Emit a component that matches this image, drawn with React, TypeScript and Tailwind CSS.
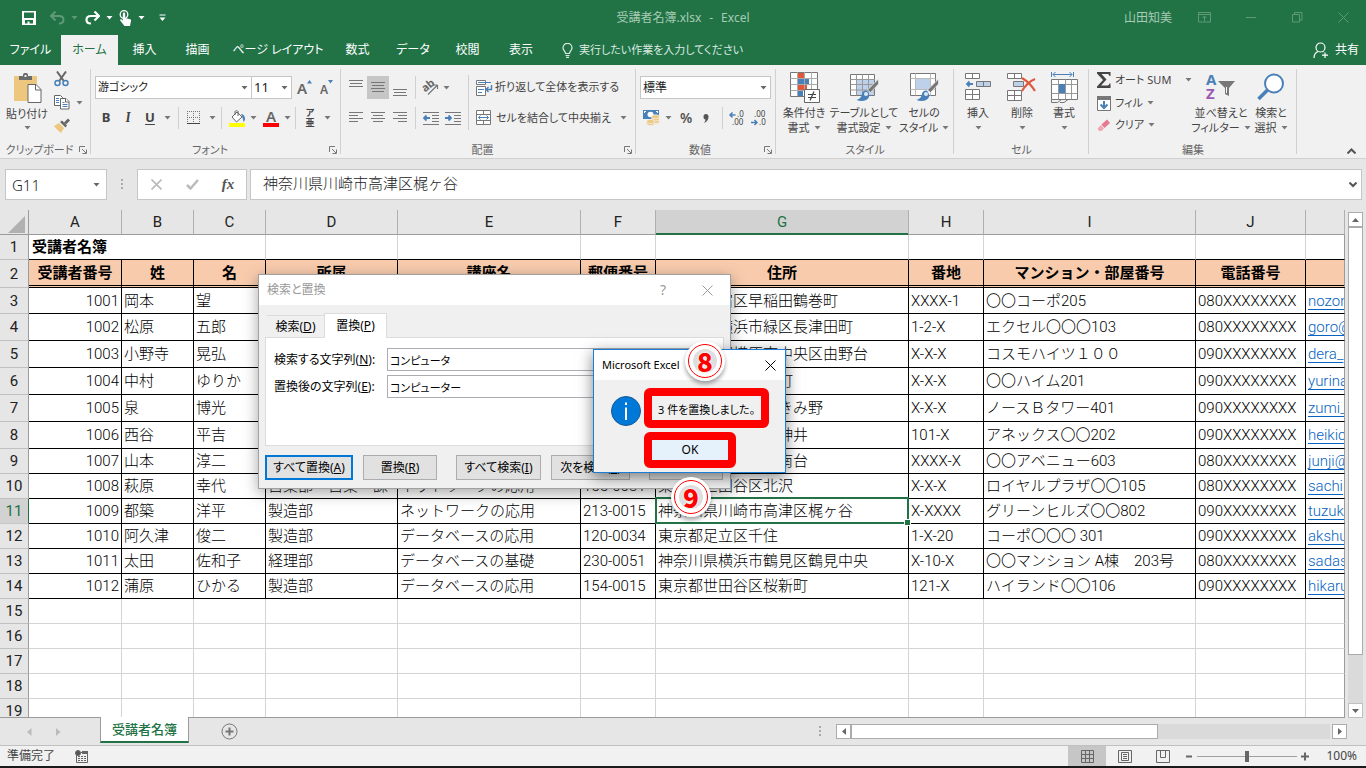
import { useState, type ReactNode } from 'react'

type Row = {
  id: string
  last: string
  first: string
  dept: string
  course: string
  zip: string
  address: string
  block: string
  building: string
  phone: string
  mail: string
}

const rows: Row[] = [
  { id: '1001', last: '岡本', first: '望', dept: '', course: '', zip: '', address: '東京都新宿区早稲田鶴巻町', block: 'XXXX-1', building: '〇〇コーポ205', phone: '080XXXXXXXX', mail: 'nozomi@' },
  { id: '1002', last: '松原', first: '五郎', dept: '', course: '', zip: '', address: '神奈川県横浜市緑区長津田町', block: '1-2-X', building: 'エクセル〇〇〇103', phone: '080XXXXXXXX', mail: 'goro@' },
  { id: '1003', last: '小野寺', first: '晃弘', dept: '', course: '', zip: '', address: '神奈川県相模原市中央区由野台', block: 'X-X-X', building: 'コスモハイツ１００', phone: '090XXXXXXXX', mail: 'dera_' },
  { id: '1004', last: '中村', first: 'ゆりか', dept: '', course: '', zip: '', address: '東京都中央区日本町', block: 'X-X-X', building: '〇〇ハイム201', phone: '090XXXXXXXX', mail: 'yurina' },
  { id: '1005', last: '泉', first: '博光', dept: '', course: '', zip: '', address: '神奈川県大和市つきみ野', block: 'X-X-X', building: 'ノースＢタワー401', phone: '090XXXXXXXX', mail: 'zumi_' },
  { id: '1006', last: '西谷', first: '平吉', dept: '', course: '', zip: '', address: '東京都練馬区上石神井', block: '101-X', building: 'アネックス〇〇202', phone: '090XXXXXXXX', mail: 'heikic' },
  { id: '1007', last: '山本', first: '淳二', dept: '', course: '', zip: '', address: '神奈川県藤沢市湘南台', block: 'XXXX-X', building: '〇〇アベニュー603', phone: '080XXXXXXXX', mail: 'junji@' },
  { id: '1008', last: '萩原', first: '幸代', dept: '営業部　営業一課', course: 'ネットワークの応用', zip: '155-0031', address: '東京都世田谷区北沢', block: 'X-X-X', building: 'ロイヤルプラザ〇〇105', phone: '080XXXXXXXX', mail: 'sachi' },
  { id: '1009', last: '都築', first: '洋平', dept: '製造部', course: 'ネットワークの応用', zip: '213-0015', address: '神奈川県川崎市高津区梶ヶ谷', block: 'X-XXXX', building: 'グリーンヒルズ〇〇802', phone: '090XXXXXXXX', mail: 'tuzuki' },
  { id: '1010', last: '阿久津', first: '俊二', dept: '製造部', course: 'データベースの応用', zip: '120-0034', address: '東京都足立区千住', block: '1-X-20', building: 'コーポ〇〇〇 301', phone: '090XXXXXXXX', mail: 'akshun' },
  { id: '1011', last: '太田', first: '佐和子', dept: '経理部', course: 'データベースの基礎', zip: '230-0051', address: '神奈川県横浜市鶴見区鶴見中央', block: 'X-10-X', building: '〇〇マンション A棟　203号', phone: '080XXXXXXXX', mail: 'sadas' },
  { id: '1012', last: '蒲原', first: 'ひかる', dept: '製造部', course: 'データベースの応用', zip: '154-0015', address: '東京都世田谷区桜新町', block: '121-X', building: 'ハイランド〇〇106', phone: '090XXXXXXXX', mail: 'hikaru' },
]

const rowHeights = [
  'h-[26px]', 'h-[27px]', 'h-[27px]', 'h-[27px]', 'h-[27px]', 'h-[27px]',
  'h-[25px]', 'h-[25px]', 'h-[25px]', 'h-[25px]', 'h-[25px]', 'h-[25px]',
]

const columns = [
  { letter: 'A', width: 'w-[93px]', title: '受講者番号' },
  { letter: 'B', width: 'w-[72px]', title: '姓' },
  { letter: 'C', width: 'w-[72px]', title: '名' },
  { letter: 'D', width: 'w-[132px]', title: '所属' },
  { letter: 'E', width: 'w-[183px]', title: '講座名' },
  { letter: 'F', width: 'w-[75px]', title: '郵便番号' },
  { letter: 'G', width: 'w-[253px]', title: '住所' },
  { letter: 'H', width: 'w-[75px]', title: '番地' },
  { letter: 'I', width: 'w-[212px]', title: 'マンション・部屋番号' },
  { letter: 'J', width: 'w-[110px]', title: '電話番号' },
  { letter: '', width: '', title: '' },
]

const menuTabs = [
  { label: 'ファイル', width: 'w-[61px]' },
  { label: 'ホーム', width: 'w-[57px]' },
  { label: '挿入', width: 'w-[53px]' },
  { label: '描画', width: 'w-[53px]' },
  { label: 'ページ レイアウト', width: 'w-[108px]' },
  { label: '数式', width: 'w-[51px]' },
  { label: 'データ', width: 'w-[60px]' },
  { label: '校閲', width: 'w-[49px]' },
  { label: '表示', width: 'w-[58px]' },
]

function Caret({ className = 'text-[#777]' }: { className?: string }) {
  return (
    <svg className={`shrink-0 ${className}`} width="7" height="4" viewBox="0 0 7 4" fill="currentColor">
      <path d="M0.5 0h6L3.5 3.5z" />
    </svg>
  )
}

function CaretButton({ label, width = 'w-[12px]' }: { label: string; width?: string }) {
  return (
    <button aria-label={label} className={`${width} h-full shrink-0 flex items-center justify-center`}>
      <Caret />
    </button>
  )
}

function Divider() {
  return <div className="w-px h-full bg-[#d0d0d0] shrink-0" />
}

function Group({ title, width, launcher, children }: { title: string; width: string; launcher?: boolean; children: ReactNode }) {
  return (
    <section className={`${width} shrink-0 relative flex flex-col`}>
      <div className="h-[74px] flex">{children}</div>
      <div className="h-[19px] pt-0.5 flex items-center">
        <span className="flex-1 text-center text-[#666] leading-4 whitespace-nowrap">{title}</span>
        {launcher && (
          <button aria-label={`${title}の設定`} className="mr-1">
            <svg width="8" height="8" viewBox="0 0 8 8" fill="none" stroke="#777">
              <path d="M0.5 6V0.5H6M3 3l4 4M7.5 3.5v4h-4" />
            </svg>
          </button>
        )}
      </div>
      <div className="absolute right-0 top-1 h-[85px] w-px bg-[#d0d0d0]" />
    </section>
  )
}

function BigButton({ icon, lines, width }: { icon: ReactNode; lines: string[]; width: string }) {
  return (
    <button className={`${width} shrink-0 flex flex-col items-center pt-1.5 text-[#444]`}>
      <span className="h-8 flex items-center justify-center">{icon}</span>
      <span className="h-4 mt-0.5 leading-4 whitespace-nowrap">{lines[0]}</span>
      <span className="h-3.5 leading-[14px] whitespace-nowrap flex items-center gap-1">
        {lines[1]}
        <Caret />
      </span>
    </button>
  )
}

function Lines({ rows: ws, align, valign = 'mid' }: { rows: number[]; align: 'l' | 'c' | 'r'; valign?: 'top' | 'mid' | 'bot' }) {
  const top = valign === 'top' ? 2 : valign === 'bot' ? 11 : 4
  return (
    <svg width="14" height="20" viewBox="0 0 14 20" fill="#777" shapeRendering="crispEdges">
      {ws.map((w, i) => (
        <rect key={i} x={align === 'l' ? 0 : align === 'r' ? 14 - w : (14 - w) / 2} y={top + i * 3} width={w} height="1" />
      ))}
    </svg>
  )
}

const PasteIcon = () => (
  <svg width="29" height="31" viewBox="0 0 29 31">
    <path d="M1 3h23v25H1z" fill="#edc77d" />
    <path d="M6 7V3h4V1.500C10 0.700 11 0 12.500 0S15 0.700 15 1.500V3h4v4z" fill="#6b6b6b" />
    <rect x="11.500" y="2" width="2" height="2" fill="#f1f1f1" />
    <path d="M15 11.500h8l5 5V29.500H15z" fill="#fff" stroke="#666" />
    <path d="M22.500 11.500V17H28" fill="none" stroke="#666" />
  </svg>
)

const CutIcon = () => (
  <svg width="15" height="16" viewBox="0 0 15 16" fill="none">
    <path d="M3 0.500L9.800 10M12 0.500L5.200 10" stroke="#666" strokeWidth="2" />
    <circle cx="3.500" cy="12" r="2.500" stroke="#4a80b8" strokeWidth="1.500" />
    <circle cx="11.500" cy="12" r="2.500" stroke="#4a80b8" strokeWidth="1.500" />
  </svg>
)

const CopyIcon = () => (
  <svg width="16" height="15" viewBox="0 0 16 15" fill="#fff" stroke="#666">
    <path d="M0.500 0.500h6l2 2v8h-8z" />
    <path d="M2 3.500h3M2 5.500h3M2 7.500h3" stroke="#4a80b8" />
    <path d="M6.500 3.500h5.500l3 3v7.500H6.500z" />
    <path d="M11.500 3.500V7H15" />
    <path d="M8.500 7.500h2M8.500 9.500h5M8.500 11.500h5" stroke="#4a80b8" />
  </svg>
)

const BrushIcon = () => (
  <svg width="16" height="15" viewBox="0 0 16 15">
    <path d="M0 8l5-3 5 5-3 5C5 13 2 11 0 8z" fill="#edc77d" />
    <path d="M6 4l2-1.500 5 5L11.500 9.500z" fill="#666" />
    <path d="M10 4.500L14 0.500l2 2-4 4z" fill="#666" />
  </svg>
)

const BorderIcon = () => (
  <svg width="14" height="14" viewBox="0 0 14 14" fill="none" stroke="#777" shapeRendering="crispEdges">
    <path d="M0 0.500h13M0 6.500h13M0.500 0v13M6.500 0v13M12.500 0v13" strokeDasharray="1 1" />
    <path d="M0 12.500h13" stroke="#444" />
  </svg>
)

const FillIcon = () => (
  <svg width="17" height="17" viewBox="0 0 17 17">
    <path d="M3 7l5-5 5 5-5.500 5z" fill="#fff" stroke="#666" />
    <path d="M6 5V1.500C6 0.500 9 0.500 9 1.500V6" fill="none" stroke="#666" />
    <path d="M12 4c2 0 4 2 4 4.500 0 1.500-.5 2.500-1.500 3.500C14 9 13.500 7 12 4z" fill="#4a80b8" />
    <rect x="0" y="13" width="16" height="4" fill="#ff0" />
  </svg>
)

const OrientIcon = () => (
  <svg className="overflow-visible" width="17" height="17" viewBox="0 0 17 17">
    <text x="0" y="10" fontSize="11" fontWeight="700" fill="#666" fontFamily="Noto Sans" transform="rotate(-38 6 9)">ab</text>
    <path d="M5 15.500L14.500 6M14.500 6h-4M14.500 6v4" stroke="#777" fill="none" strokeWidth="1.200" />
  </svg>
)

const IndentIcon = ({ right }: { right?: boolean }) => (
  <svg width="17" height="14" viewBox="0 0 17 14" fill="none" stroke="#777">
    <path d="M0 1.500h16M9 4.500h7M9 7.500h7M9 10.500h7M0 13.500h16" shapeRendering="crispEdges" />
    <path d={right ? 'M0 7h6M3.500 4.500L6 7l-2.500 2.500' : 'M7 7H1M3.500 4.500L1 7l2.500 2.500'} stroke="#4a80b8" strokeWidth="1.800" />
  </svg>
)

const WrapIcon = () => (
  <svg width="17" height="16" viewBox="0 0 17 16" fill="none">
    <path d="M0.500 0.500h9v4h-9z" fill="#fff" stroke="#777" />
    <path d="M2 2.500h13" stroke="#4a80b8" />
    <path d="M0.500 6.500h9v9h-9z" fill="#fff" stroke="#777" />
    <path d="M2 9.500h6M2 12.500h4" stroke="#4a80b8" />
    <path d="M15.500 5v4.500H10M12.500 7L10 9.500l2.500 2.500" stroke="#4a80b8" strokeWidth="1.400" />
  </svg>
)

const MergeIcon = () => (
  <svg width="16" height="16" viewBox="0 0 16 16" fill="#fff" stroke="#777">
    <path d="M0.500 0.500h14v14H0.500zM0.500 4.500h14M0.500 10.500h14M7.500 0.500v4M7.500 10.500v4" />
    <path d="M2.500 7.500h10M4.500 5.500l-2 2 2 2M10.500 5.500l2 2-2 2" fill="none" stroke="#4a80b8" />
  </svg>
)

const MoneyIcon = () => (
  <svg width="17" height="16" viewBox="0 0 17 16">
    <rect x="0" y="0" width="16" height="9" fill="#4a80b8" />
    <ellipse cx="7.500" cy="4.500" rx="3" ry="2.700" fill="#fff" />
    <path d="M1 1h2v1H2v1H1zM13 1h2v2h-1V2h-1z" fill="#fff" />
    <g fill="#edc77d" stroke="#f1f1f1" strokeWidth="0.800">
      <ellipse cx="12.500" cy="11.500" rx="4" ry="2" />
      <ellipse cx="12.500" cy="9" rx="4" ry="2" />
      <ellipse cx="12.500" cy="6.800" rx="4" ry="2" />
      <ellipse cx="7.500" cy="13.500" rx="4" ry="2" />
      <ellipse cx="7.500" cy="11.500" rx="4" ry="2" />
    </g>
  </svg>
)

const DecimalIcon = ({ more }: { more?: boolean }) => (
  <svg className="overflow-visible" width="16" height="15" viewBox="0 0 16 15" fill="#444" fontSize="8" fontFamily="Noto Sans">
    <text x={more ? 8 : 3} y="6">{more ? '.0' : '.00'}</text>
    <text x={more ? 3 : 8} y="14">{more ? '.00' : '.0'}</text>
    {more ? (
      <path d="M6.500 4H1M3.500 1.500L1 4l2.500 2.500" stroke="#4a80b8" strokeWidth="1.500" fill="none" />
    ) : (
      <path d="M0 11.500h6M3.500 9L6 11.500 3.500 14" stroke="#4a80b8" strokeWidth="1.500" fill="none" />
    )}
  </svg>
)

const CondIcon = () => (
  <svg width="31" height="31" viewBox="0 0 31 31">
    <path d="M1.500 0.500h27v24h-27z" fill="#fff" stroke="#777" />
    <path d="M9 1h6v5H9zM9 13h9v5H9z" fill="#e0583c" />
    <path d="M9 7h11v5H9zM9 19h5v5H9z" fill="#4a80b8" />
    <path d="M8.500 0v24M15.500 0v24M22.500 0v24M1.500 6.500h27M1.500 12.500h27M1.500 18.500h27" stroke="#aaa" />
    <path d="M15.500 17.500h15v13h-15z" fill="#fff" stroke="#666" />
    <path d="M19 22.500h8M19 25.500h8M25 19.500l-4 9" stroke="#444" strokeWidth="1.200" />
  </svg>
)

const StyleBrush = () => (
  <>
    <path d="M28.500 6v5L20.500 19.500l-3-2.500z" fill="#777" stroke="#f1f1f1" strokeWidth="0.700" />
    <path d="M17 17.500c-3-.5-4.500 1-5 3.500-.5 3-2 5-5.500 6 5 2.200 11 1 12.500-3 .7-2-.2-4-2-6.500z" fill="#4a80b8" />
    <circle cx="16" cy="21" r="2" fill="#dce9f6" />
  </>
)

const TableStyleIcon = () => (
  <svg width="29" height="29" viewBox="0 0 29 29">
    <path d="M0.500 1.500h24v21h-24z" fill="#fff" stroke="#777" />
    <path d="M7 7h17v15H7z" fill="#bdd1ea" />
    <path d="M6.500 1.500v21M12.500 1.500v21M18.500 1.500v21M0.500 6.500h24M0.500 11.500h24M0.500 17h24" stroke="#999" />
    <StyleBrush />
  </svg>
)

const CellStyleIcon = () => (
  <svg width="29" height="29" viewBox="0 0 29 29">
    <path d="M0.500 0.500h25v22h-25z" fill="#fff" stroke="#777" />
    <path d="M5.500 0.500v22M20.500 0.500v22M0.500 5.500h25M0.500 16.500h25" stroke="#bbb" />
    <path d="M6 6h14v10H6z" fill="#bdd1ea" />
    <StyleBrush />
  </svg>
)

const InsertIcon = () => (
  <svg width="27" height="28" viewBox="0 0 27 28" fill="#fff" stroke="#777">
    <path d="M0.500 0.500h14v5h-14zM7.500 0.500v5M0.500 16.500h14v10h-14zM7.500 16.500v10M0.500 21.500h14" />
    <path d="M11.500 8.500h14v5h-14zM18.500 8.500v5" fill="#bdd1ea" />
    <path d="M8 11H2M4.500 8.500L2 11l2.500 2.500" fill="none" stroke="#4a80b8" strokeWidth="1.800" />
  </svg>
)

const DeleteIcon = () => (
  <svg width="30" height="28" viewBox="0 0 30 28" fill="#fff" stroke="#777">
    <path d="M0.500 0.500h14v5h-14zM7.500 0.500v5M0.500 17.500h14v10h-14zM7.500 17.500v10M0.500 22.500h14" />
    <path d="M6.500 8.500h10v5h-10z" fill="#bdd1ea" />
    <path d="M15 5c5 3 10 8 13 13M28 6c-5 2-10 7-13 12" fill="none" stroke="#e0583c" strokeWidth="2.200" />
  </svg>
)

const FormatIcon = () => (
  <svg width="29" height="31" viewBox="0 0 29 31" fill="#fff" stroke="#777">
    <path d="M1.500 0v5M23.500 0v5M3 2.500h19M5.500 0L3 2.500 5.500 5M19.500 0L22 2.500 19.500 5" fill="none" stroke="#4a80b8" />
    <path d="M1.500 7.500h26v20h-26z" />
    <path d="M8.500 7.500v20M15.500 7.500v20M21.500 7.500v20M1.500 12.500h26M1.500 21.500h26" stroke="#999" />
    <path d="M9 12h6v9H9z" fill="#4a80b8" stroke="none" />
    <path d="M1.500 27.500v3h6l4-3M10 30.500h4l4-3" fill="none" />
  </svg>
)

const SortIcon = () => (
  <svg className="overflow-visible" width="30" height="28" viewBox="0 0 30 28" fontFamily="Noto Sans" fontWeight="700" fontSize="15">
    <text x="0" y="12" fill="#4a80b8">A</text>
    <text x="0" y="26" fill="#9b59b6">Z</text>
    <path d="M12 8h17l-6 7v8l-4-2v-6z" fill="#777" />
    <path d="M20.500 14v6" stroke="#fff" />
  </svg>
)

const SearchIcon = () => (
  <svg width="28" height="28" viewBox="0 0 28 28" fill="none">
    <path d="M1.500 26L10.500 17" stroke="#4a80b8" strokeWidth="3.500" />
    <circle cx="17" cy="10.500" r="9" fill="#fff" stroke="#4a80b8" strokeWidth="2" />
  </svg>
)

function TitleBar() {
  return (
    <header className="h-[35px] shrink-0 relative flex items-center text-white">
      <button aria-label="上書き保存" className="ml-[22px] w-[14px]">
        <svg width="14" height="14" viewBox="0 0 14 14">
          <path fillRule="evenodd" d="M0 0h14v14H0zM2 1.500V7h10V1.500zM3 9v3.500h2.500v-2h2v2H11V9z" fill="#fff" />
        </svg>
      </button>
      <button aria-label="元に戻す" className="ml-3.5 flex items-center gap-[6px] text-[#5e9a78]">
        <svg width="15" height="14" viewBox="0 0 15 14" fill="none" stroke="currentColor" strokeWidth="2">
          <path d="M5.500 0.500L1 5l4.500 4.500M1 5h8c3 0 4.500 1.500 4.500 3.700S12 12.500 9 12.500" />
        </svg>
        <Caret className="text-[#5e9a78]" />
      </button>
      <button aria-label="やり直し" className="ml-[7px] flex items-center gap-[6px]">
        <svg width="15" height="14" viewBox="0 0 15 14" fill="none" stroke="currentColor" strokeWidth="2.200">
          <path d="M9.500 0.500L14 5 9.500 9.500M14 5H6C3 5 1.500 6.500 1.500 8.700S3 12.500 6 12.500" />
        </svg>
        <Caret className="text-white" />
      </button>
      <button aria-label="タッチ/マウス モードの切り替え" className="ml-[6px] flex items-center gap-[6px]">
        <svg width="13" height="16" viewBox="0 0 13 16">
          <circle cx="5" cy="4.500" r="3.800" fill="none" stroke="#fff" strokeWidth="1.300" />
          <path d="M3.800 3.500c0-1.500 2.400-1.500 2.400 0V8l5 1.200c.8.300 1 .8.800 1.600L11 16H5.500L1.200 10.500c-.3-1 .8-1.500 1.600-.8l1 1z" fill="#fff" />
        </svg>
        <Caret className="text-white" />
      </button>
      <button aria-label="クイック アクセス ツール バーのカスタマイズ" className="ml-3.5">
        <svg width="7" height="8" viewBox="0 0 7 8" fill="#fff">
          <path d="M0.500 0.500h6v1h-6zM0.500 3.500h6l-3 3.500z" />
        </svg>
      </button>
      <h1 className="absolute left-1/2 -translate-x-1/2 w-[140px] flex justify-center gap-2 text-[#a7cbb5] whitespace-nowrap">
        <span>受講者名簿.xlsx</span>
        <span>-</span>
        <span>Excel</span>
      </h1>
      <div className="ml-auto flex items-center text-[#5e9a78]">
        <span className="w-[49px] text-[#a7cbb5] whitespace-nowrap">山田知美</span>
        <button aria-label="リボンの表示オプション" className="ml-[25px]">
          <svg width="13" height="11" viewBox="0 0 13 11" fill="none" stroke="currentColor">
            <path d="M0.500 0.500h12v9.500h-12zM0.500 2.500h12M6.500 9V4.500M4.500 6l2-2 2 2" />
          </svg>
        </button>
        <button aria-label="最小化" className="ml-[35px]">
          <svg width="11" height="11" viewBox="0 0 11 11" stroke="currentColor"><path d="M0 5.500h10" /></svg>
        </button>
        <button aria-label="元に戻す (縮小)" className="ml-[35px]">
          <svg width="11" height="11" viewBox="0 0 11 11" fill="none" stroke="currentColor">
            <path d="M0.500 2.500h7v7.500h-7zM2.500 2.500v-2h7.500v7.500H8" />
          </svg>
        </button>
        <button aria-label="閉じる" className="ml-[35px] mr-[17px]">
          <svg width="11" height="11" viewBox="0 0 11 11" stroke="currentColor"><path d="M0.500 0.500l10 10M10.500 0.500l-10 10" /></svg>
        </button>
      </div>
    </header>
  )
}

function MenuBar() {
  const [active, setActive] = useState('ホーム')
  return (
    <nav className="h-[30px] shrink-0 flex items-stretch text-white">
      {menuTabs.map((t) => (
        <button
          key={t.label}
          onClick={() => setActive(t.label)}
          className={`${t.width} shrink-0 whitespace-nowrap ${t.label === active ? 'bg-[#f1f1f1] text-[#217346]' : ''}`}
        >
          {t.label}
        </button>
      ))}
      <button className="ml-3 flex items-center gap-1.5 text-[11px] text-[#dbeae1] whitespace-nowrap">
        <svg width="11" height="15" viewBox="0 0 11 15" fill="none" stroke="currentColor" strokeWidth="1.200">
          <path d="M3.500 10.500C3.500 8 1 7.500 1 4.800a4.500 4.500 0 0 1 9 0c0 2.700-2.500 3.200-2.500 5.700zM3.500 12.500h4M4 14.300h3" />
        </svg>
        実行したい作業を入力してください
      </button>
      <button className="ml-auto mr-[7px] flex items-center gap-1.5">
        <svg width="16" height="17" viewBox="0 0 16 17" fill="none" stroke="currentColor" strokeWidth="1.200">
          <circle cx="7.500" cy="5.500" r="4.500" />
          <path d="M1 16c0-3.500 1.500-5.500 4-6.500M9.500 9.500l1 .5M12 10.500v5.500M9 13.200h6" />
        </svg>
        共有
      </button>
    </nav>
  )
}

function Ribbon() {
  return (
    <div className="h-[94px] shrink-0 flex bg-[#f1f1f1] border-b border-[#d0d0d0] text-[11px] text-[#444] overflow-hidden">
      <Group title="クリップボード" width="w-[91px]" launcher>
        <button className="w-[50px] ml-0.5 flex flex-col items-center pt-2">
          <PasteIcon />
          <span className="mt-0.5 leading-4 whitespace-nowrap">貼り付け</span>
          <span className="h-3 flex items-center"><Caret /></span>
        </button>
        <div className="flex flex-col pt-1.5 pl-0.5 gap-2">
          <button aria-label="切り取り"><CutIcon /></button>
          <button aria-label="コピー" className="flex items-center gap-1.5"><CopyIcon /><Caret /></button>
          <button aria-label="書式のコピー/貼り付け"><BrushIcon /></button>
        </div>
      </Group>

      <Group title="フォント" width="w-[250px]" launcher>
        <div className="flex flex-col pt-[11px] pl-1 gap-2">
          <div className="h-[23px] flex">
            <div className="relative w-[157px]">
              <select aria-label="フォント" className="appearance-none w-full h-full bg-white border border-[#c6c6c6] px-0.5 text-[#222]">
                <option>游ゴシック</option>
              </select>
              <Caret className="absolute right-1 top-2.5 text-[#666] pointer-events-none" />
            </div>
            <div className="relative w-[40px]">
              <select aria-label="フォント サイズ" className="appearance-none w-full h-full bg-white border border-l-0 border-[#c6c6c6] px-0.5 text-[13px] text-[#222]">
                <option>11</option>
              </select>
              <Caret className="absolute right-1 top-2.5 text-[#666] pointer-events-none" />
            </div>
            <button aria-label="フォント サイズの拡大" className="ml-[5px] w-[18px] flex">
              <span className="mt-0.5 text-[15px] font-semibold leading-5 text-[#666]">A</span>
              <svg className="mt-1" width="5" height="4" viewBox="0 0 5 4"><path d="M2.500 0L5 3.500H0z" fill="#4a80b8" /></svg>
            </button>
            <button aria-label="フォント サイズの縮小" className="ml-[5px] w-[18px] flex">
              <span className="mt-1 text-xs font-semibold leading-5 text-[#666]">A</span>
              <svg className="mt-1" width="5" height="4" viewBox="0 0 5 4"><path d="M0 0h5L2.500 3.500z" fill="#4a80b8" /></svg>
            </button>
          </div>
          <div className="h-[22px] flex items-center text-[13px] text-[#444]">
            <button className="w-[22px] font-bold">B</button>
            <button className="w-[22px] italic font-bold font-serif">I</button>
            <button className="w-[22px] font-bold underline underline-offset-2">U</button>
            <CaretButton label="下線のスタイル" />
            <div className="w-[5px]" />
            <Divider />
            <button aria-label="罫線" className="ml-2 w-4"><BorderIcon /></button>
            <CaretButton label="罫線の種類" width="w-[18px]" />
            <Divider />
            <button aria-label="塗りつぶしの色" className="ml-[7px] w-[17px]"><FillIcon /></button>
            <CaretButton label="塗りつぶしの色の一覧" width="w-[15px]" />
            <button aria-label="フォントの色" className="ml-0.5 w-4 h-[17px] flex flex-col items-center">
              <span className="text-[15px] font-semibold leading-[13px] text-[#666]">A</span>
              <span className="w-4 h-1 bg-[#f00] shrink-0" />
            </button>
            <CaretButton label="フォントの色の一覧" width="w-[16px]" />
            <Divider />
            <button aria-label="ふりがなの表示" className="ml-[7px] w-[14px] flex flex-col items-center text-[9px] leading-[10px] font-bold">
              <span>ア</span>
              <span>亜</span>
            </button>
            <CaretButton label="ふりがなの設定" width="w-[20px]" />
          </div>
        </div>
      </Group>

      <Group title="配置" width="w-[295px]" launcher>
        <div className="flex flex-col pt-[11px] pl-1 gap-2">
          <div className="h-[23px] flex items-center">
            <button aria-label="上揃え" className="w-[22px] flex justify-center"><Lines rows={[14, 12, 14]} align="c" valign="top" /></button>
            <button aria-label="上下中央揃え" className="w-[22px] h-full bg-[#c6c6c6] flex justify-center items-center"><Lines rows={[14, 12, 14, 12]} align="c" /></button>
            <button aria-label="下揃え" className="w-[22px] flex justify-center"><Lines rows={[14, 12, 14]} align="c" valign="bot" /></button>
            <div className="w-1" />
            <Divider />
            <button aria-label="方向" className="ml-[7px]"><OrientIcon /></button>
            <CaretButton label="方向の一覧" width="w-[13px]" />
          </div>
          <div className="h-[22px] flex items-center">
            <button aria-label="左揃え" className="w-[22px] flex justify-center"><Lines rows={[14, 9, 14, 9]} align="l" /></button>
            <button aria-label="中央揃え" className="w-[22px] flex justify-center"><Lines rows={[14, 10, 14, 10]} align="c" /></button>
            <button aria-label="右揃え" className="w-[22px] flex justify-center"><Lines rows={[14, 9, 14, 9]} align="r" /></button>
            <div className="w-1" />
            <Divider />
            <button aria-label="インデントを減らす" className="ml-[7px] w-[22px]"><IndentIcon /></button>
            <button aria-label="インデントを増やす" className="w-[17px]"><IndentIcon right /></button>
          </div>
        </div>
        <div className="ml-1.5 mt-2.5 h-[55px] w-px bg-[#d0d0d0]" />
        <div className="flex flex-col pt-[11px] pl-[7px] gap-2">
          <button className="h-[23px] flex items-center gap-0.5 whitespace-nowrap"><WrapIcon />折り返して全体を表示する</button>
          <div className="h-[22px] w-[153px] flex items-center">
            <button className="flex-1 flex items-center gap-1 whitespace-nowrap"><MergeIcon />セルを結合して中央揃え</button>
            <CaretButton label="結合の一覧" />
          </div>
        </div>
      </Group>

      <Group title="数値" width="w-[140px]" launcher>
        <div className="flex flex-col pt-[11px] pl-1 gap-2">
          <div className="relative h-[23px] w-[131px]">
            <select aria-label="表示形式" className="appearance-none w-full h-full bg-white border border-[#c6c6c6] px-0.5 text-xs text-[#222]">
              <option>標準</option>
            </select>
            <Caret className="absolute right-1 top-2.5 text-[#666] pointer-events-none" />
          </div>
          <div className="h-[22px] flex items-center">
            <button aria-label="通貨表示形式" className="ml-[3px]"><MoneyIcon /></button>
            <CaretButton label="通貨の一覧" width="w-[16px]" />
            <button className="w-5 text-sm font-semibold text-[#555]">%</button>
            <button aria-label="桁区切りスタイル" className="w-5 flex justify-center">
              <svg width="6" height="9" viewBox="0 0 6 9"><path d="M5.500 2.500C5.500 5.500 4 8 1 9c1-1.500 1.500-2.500 1.500-3.500C1 5.500 0.500 4 0.500 2.800 0.500 1 1.500 0 3 0s2.500 1 2.500 2.500z" fill="#555" /></svg>
            </button>
            <div className="w-[6px]" />
            <Divider />
            <button aria-label="小数点以下の表示桁数を増やす" className="ml-[6px] w-[22px]"><DecimalIcon more /></button>
            <button aria-label="小数点以下の表示桁数を減らす"><DecimalIcon /></button>
          </div>
        </div>
      </Group>

      <Group title="スタイル" width="w-[178px]">
        <BigButton icon={<CondIcon />} lines={['条件付き', '書式']} width="w-[56px]" />
        <BigButton icon={<TableStyleIcon />} lines={['テーブルとして', '書式設定']} width="w-[64px]" />
        <BigButton icon={<CellStyleIcon />} lines={['セルの', 'スタイル']} width="w-[56px]" />
      </Group>

      <Group title="セル" width="w-[135px]">
        <BigButton icon={<InsertIcon />} lines={['挿入', '']} width="w-[48px]" />
        <BigButton icon={<DeleteIcon />} lines={['削除', '']} width="w-[40px]" />
        <BigButton icon={<FormatIcon />} lines={['書式', '']} width="w-[44px]" />
      </Group>

      <Group title="編集" width="w-[208px]">
        <div className="w-[104px] pl-2 pt-[3px] flex flex-col">
          <button className="h-6 flex items-center gap-1 whitespace-nowrap">
            <svg width="14" height="16" viewBox="0 0 14 16"><path d="M0 0h13.500v4h-1C12 2.500 11.500 2 10 2H4.500l5 5.500L4 13.500h6c1.500 0 2-.5 2.500-2h1V16H0v-1.500l6-6.500-6-6.500z" fill="#444" /></svg>
            オート SUM
            <span className="w-1.5" />
            <Caret />
          </button>
          <button className="h-[22px] flex items-center gap-1 whitespace-nowrap">
            <svg width="14" height="15" viewBox="0 0 14 15" fill="none">
              <path d="M0.500 0.500h13v14H0.500z" fill="#fff" stroke="#777" />
              <path d="M0 0h14v4H0z" fill="#777" />
              <path d="M7 5v7M3.500 8.500L7 12l3.500-3.500" stroke="#4a80b8" strokeWidth="2" />
            </svg>
            フィル
            <Caret />
          </button>
          <button className="h-[22px] flex items-center gap-1 whitespace-nowrap">
            <svg width="14" height="13" viewBox="0 0 14 13">
              <path d="M4.500 5.500L10 0.500l3 3.500-5.500 5z" fill="#e8788f" />
              <path d="M4 6l3 3.500-2.500 2.500H2L0.500 9.500z" fill="#f0a8b6" />
            </svg>
            クリア
            <Caret />
          </button>
        </div>
        <BigButton icon={<SortIcon />} lines={['並べ替えと', 'フィルター']} width="w-[56px]" />
        <BigButton icon={<SearchIcon />} lines={['検索と', '選択']} width="w-[44px]" />
      </Group>

      <div className="flex-1 flex items-end justify-end pr-2.5 pb-1">
        <button aria-label="リボンを折りたたむ">
          <svg width="9" height="6" viewBox="0 0 9 6" fill="none" stroke="#555" strokeWidth="2"><path d="M0.500 5.500l4-4 4 4" /></svg>
        </button>
      </div>
    </div>
  )
}

function FormulaBar() {
  return (
    <div className="shrink-0 flex pt-2.5 pb-2.5 pl-[5px] pr-1 bg-[#e6e6e6]">
      <div className="w-[102px] h-[31px] shrink-0 flex bg-white border border-[#c6c6c6]">
        <input aria-label="名前ボックス" defaultValue="G11" className="w-0 flex-1 pl-1.5 text-[15px] font-light text-[#222] outline-none" />
        <button aria-label="名前の一覧" className="w-5 flex items-center justify-center"><Caret className="text-[#666]" /></button>
      </div>
      <div className="w-[30px] flex items-center justify-center">
        <svg width="2" height="11" viewBox="0 0 2 11" fill="#aaa"><path d="M0 0h2v2H0zM0 4h2v2H0zM0 8h2v2H0z" /></svg>
      </div>
      <div className="w-[110px] h-[31px] shrink-0 flex items-center bg-white border border-[#c6c6c6]">
        <button aria-label="キャンセル" className="w-[36px] flex justify-center">
          <svg width="11" height="11" viewBox="0 0 11 11" stroke="#bbb" strokeWidth="1.700"><path d="M0.500 0.500l10 10M10.500 0.500l-10 10" /></svg>
        </button>
        <button aria-label="入力" className="w-[36px] flex justify-center">
          <svg width="13" height="11" viewBox="0 0 13 11" fill="none" stroke="#bbb" strokeWidth="2.500"><path d="M1 6l3.500 3.500L12 1" /></svg>
        </button>
        <button aria-label="関数の挿入" className="w-[36px] text-[15px] italic font-bold text-[#555] font-['Liberation_Serif']">fx</button>
      </div>
      <div className="ml-[3px] h-[31px] flex-1 flex bg-white border border-[#c6c6c6]">
        <input
          aria-label="数式バー"
          defaultValue="神奈川県川崎市高津区梶ヶ谷"
          className="flex-1 pl-3 text-[15px] font-light text-[#222] outline-none [font-feature-settings:normal] font-[Roboto,'Noto_Sans_CJK_JP',sans-serif]"
        />
        <button aria-label="数式バーの展開" className="w-4 flex items-center justify-center">
          <svg width="8" height="6" viewBox="0 0 8 6" fill="none" stroke="#555" strokeWidth="2"><path d="M0.500 0.500L4 4 7.500 0.500" /></svg>
        </button>
      </div>
    </div>
  )
}

function RowHead({ n, selected }: { n: number; selected?: boolean }) {
  return (
    <th
      className={`border-r border-b font-normal text-center ${
        selected ? 'bg-[#d2d2d2] text-[#217346] border-r-[#217346] border-b-[#c6c6c6]' : 'bg-[#e6e6e6] text-[#222] border-r-[#9b9b9b] border-b-[#c0c0c0]'
      }`}
    >
      {n}
    </th>
  )
}

function Sheet() {
  const cell = 'border-r border-b border-black pl-0.5 overflow-hidden font-light'
  return (
    <div className="flex-1 min-w-0 overflow-hidden border-b border-[#9b9b9b] bg-white">
      <table className="w-full table-fixed border-separate border-spacing-0 whitespace-nowrap text-[15px] leading-5 text-black [font-feature-settings:normal] font-[Roboto,'Noto_Sans_CJK_JP',sans-serif]">
        <colgroup>
          <col className="w-[29px]" />
          {columns.map((c, i) => <col key={i} className={c.width} />)}
        </colgroup>
        <thead>
          <tr className="h-[25px] bg-[#e6e6e6]">
            <th className="border-r border-b border-[#9b9b9b] pr-[3px] pt-1">
              <svg className="ml-auto" width="17" height="17" viewBox="0 0 17 17"><path d="M17 0v17H0z" fill="#b1b1b1" /></svg>
            </th>
            {columns.map((c, i) => (
              <th
                key={i}
                className={`border-r border-b font-normal ${
                  c.letter === 'G'
                    ? 'bg-[#d2d2d2] text-[#217346] border-r-[#b0b0b0] border-b-[#217346] shadow-[inset_0_-1px_#217346]'
                    : 'text-[#222] border-r-[#b0b0b0] border-b-[#9b9b9b]'
                }`}
              >
                {c.letter}
              </th>
            ))}
          </tr>
        </thead>
        <tbody>
          <tr className="h-[25px]">
            <RowHead n={1} />
            <td colSpan={3} className="border-r border-r-[#d4d4d4] border-b border-b-black pl-[3px] font-bold">受講者名簿</td>
            {columns.slice(3).map((_, i) => (
              <td key={i} className="border-r border-r-[#d4d4d4] border-b border-b-black last:border-r-[#9b9b9b]" />
            ))}
          </tr>
          <tr className="h-[28px]">
            <RowHead n={2} />
            {columns.map((c, i) => (
              <th key={i} className="bg-[#f8cbad] border-r border-b-3 border-b-black border-r-black [border-bottom-style:double] last:border-r-[#9b9b9b] p-0 font-bold">
                {c.title}
              </th>
            ))}
          </tr>
          {rows.map((r, i) => (
            <tr key={r.id} className={rowHeights[i]}>
              <RowHead n={i + 3} selected={i === 8} />
              <td className={`${cell} text-right pr-0.5`}>{r.id}</td>
              <td className={cell}>{r.last}</td>
              <td className={cell}>{r.first}</td>
              <td className={cell}>{r.dept}</td>
              <td className={cell}>{r.course}</td>
              <td className={cell}>{r.zip}</td>
              <td className={i === 8 ? 'relative border-r border-b border-black pl-0.5 font-light' : cell}>
                {r.address}
                {i === 8 && (
                  <>
                    <span className="absolute -inset-px -top-0.5 -left-px border-2 border-[#217346]" />
                    <span className="absolute -right-0.5 -bottom-0.5 size-[5px] bg-[#217346] outline-1 outline-white" />
                  </>
                )}
              </td>
              <td className={cell}>{r.block}</td>
              <td className={cell}>{r.building}</td>
              <td className={cell}>{r.phone}</td>
              <td className="border-r border-b border-b-black border-r-[#9b9b9b] pl-0.5 overflow-hidden font-light">
                <a href="#" className="text-[#0563c1] underline underline-offset-3">{r.mail}</a>
              </td>
            </tr>
          ))}
          {[15, 16, 17, 18, 19].map((n) => (
            <tr key={n} className="h-[25px]">
              <RowHead n={n} />
              {columns.map((_, i) => (
                <td key={i} className="border-r border-b border-[#d4d4d4] last:border-r-[#9b9b9b]" />
              ))}
            </tr>
          ))}
        </tbody>
      </table>
    </div>
  )
}

function VerticalScroll() {
  return (
    <div className="w-[21px] shrink-0 flex flex-col pl-[3px] pr-[3px] pt-0.5">
      <button aria-label="上へ" className="h-[15px] w-[15px] bg-white border border-[#ababab] flex items-center justify-center">
        <svg width="7" height="4" viewBox="0 0 7 4"><path d="M3.500 0L7 4H0z" fill="#666" /></svg>
      </button>
      <div className="flex-1 w-[15px] bg-[#dadada]">
        <div className="h-[90%] bg-white border border-[#ababab]" />
      </div>
      <button aria-label="下へ" className="h-[15px] w-[15px] bg-white border border-[#c0c0c0] flex items-center justify-center">
        <svg width="7" height="4" viewBox="0 0 7 4"><path d="M0 0h7L3.500 4z" fill="#666" /></svg>
      </button>
    </div>
  )
}

function SheetTabs() {
  return (
    <div className="h-[27px] shrink-0 flex items-center bg-[#e6e6e6]">
      <button aria-label="前のシート" className="ml-[27px]">
        <svg width="5" height="8" viewBox="0 0 5 8"><path d="M4.500 0v8L0 4z" fill="#bbb" /></svg>
      </button>
      <button aria-label="次のシート" className="ml-6">
        <svg width="5" height="8" viewBox="0 0 5 8"><path d="M0 0v8l4.500-4z" fill="#bbb" /></svg>
      </button>
      <button className="relative ml-[39px] w-[89px] h-[26px] -mt-px pt-0.5 self-start bg-white border-x border-x-[#9b9b9b] border-b-2 border-b-[#217346] text-[#217346] font-medium text-[13px] whitespace-nowrap">
        受講者名簿
      </button>
      <button aria-label="新しいシート" className="ml-8">
        <svg width="17" height="17" viewBox="0 0 17 17" fill="none" stroke="#777">
          <circle cx="8.500" cy="8.500" r="7.500" />
          <path d="M8.500 4.500v8M4.500 8.500h8" strokeWidth="2" />
        </svg>
      </button>
      <div className="ml-auto mr-[19px] w-[528px] flex items-center">
        <svg width="2" height="11" viewBox="0 0 2 11" fill="#aaa"><path d="M0 0h2v2H0zM0 4h2v2H0zM0 8h2v2H0z" /></svg>
        <button aria-label="左へ" className="ml-[15px] size-[15px] bg-white border border-[#ababab] flex items-center justify-center">
          <svg width="4" height="7" viewBox="0 0 4 7"><path d="M4 0v7L0 3.500z" fill="#666" /></svg>
        </button>
        <div className="flex-1 h-[15px] bg-[#dadada]">
          <div className="w-[64%] h-full bg-white border border-[#ababab]" />
        </div>
        <button aria-label="右へ" className="ml-0.5 size-[15px] bg-white border border-[#ababab] flex items-center justify-center">
          <svg width="4" height="7" viewBox="0 0 4 7"><path d="M0 0v7l4-3.500z" fill="#666" /></svg>
        </button>
      </div>
    </div>
  )
}

function StatusBar() {
  const [zoom, setZoom] = useState(100)
  return (
    <footer className="h-[23px] shrink-0 flex items-center bg-[#f1f1f1] border-t border-t-[#c0c0c0] border-b-2 border-b-[#1a1a1a] text-[#444]">
      <span className="ml-[7px] w-[50px] whitespace-nowrap">準備完了</span>
      <button aria-label="マクロの記録" className="ml-[18px]">
        <svg width="14" height="13" viewBox="0 0 14 13" fill="none" stroke="#666">
          <path d="M1.500 5v7.500h11V2.500H6" />
          <path d="M7 2.500h6" strokeWidth="3" />
          <circle cx="3" cy="3" r="2.500" fill="#555" />
          <path d="M3 6.500h8M3 8.500h8M3 10.500h8" strokeDasharray="2 1" />
        </svg>
      </button>
      <div className="ml-auto h-full flex items-center">
        <button aria-label="標準" className="w-[38px] h-full bg-[#c6c6c6] flex items-center justify-center">
          <svg width="13" height="13" viewBox="0 0 13 13" fill="none" stroke="#666"><path d="M0.500 0.500h12v12H0.500zM0.500 4.500h12M0.500 8.500h12M4.500 0.500v12M8.500 0.500v12" /></svg>
        </button>
        <button aria-label="ページ レイアウト" className="w-[38px] flex justify-center">
          <svg width="14" height="13" viewBox="0 0 14 13" fill="none" stroke="#666"><path d="M0.500 0.500h13v12H0.500zM3.500 2.500h7v8h-7zM5 4.500h4M5 6.500h4M5 8.500h4" /></svg>
        </button>
        <button aria-label="改ページ プレビュー" className="w-[38px] flex justify-center">
          <svg width="14" height="13" viewBox="0 0 14 13" fill="none" stroke="#666"><path d="M0.500 0.500h13v12H0.500zM4.500 0.500v7h5v-7" /></svg>
        </button>
        <button aria-label="縮小" className="ml-1 mr-1">
          <svg width="7" height="9" viewBox="0 0 7 9"><path d="M0 3.500h6v2H0z" fill="#666" /></svg>
        </button>
        <input
          type="range"
          aria-label="ズーム"
          min={0}
          max={200}
          value={zoom}
          onChange={(e) => setZoom(Number(e.target.value))}
          className="w-[100px] h-px bg-[#a0a0a0] appearance-none [&::-webkit-slider-thumb]:appearance-none [&::-webkit-slider-thumb]:w-1 [&::-webkit-slider-thumb]:h-[11px] [&::-webkit-slider-thumb]:bg-[#666]"
        />
        <button aria-label="拡大" className="ml-1">
          <svg width="8" height="9" viewBox="0 0 8 9"><path d="M0 3.500h3V0.500h2v3h3v2H5v3H3v-3H0z" fill="#666" /></svg>
        </button>
        <span className="w-[57px] pr-[9px] text-right">{zoom}%</span>
      </div>
    </footer>
  )
}

function DialogButton({ width, primary, children }: { width: string; primary?: boolean; children: ReactNode }) {
  return (
    <button
      className={`${width} h-[25px] shrink-0 bg-[#e1e1e1] whitespace-nowrap ${primary ? 'border-2 border-[#0078d7]' : 'border border-[#adadad]'}`}
    >
      {children}
    </button>
  )
}

function ReplaceDialog() {
  return (
    <div role="dialog" aria-label="検索と置換" className="absolute left-[258px] top-[274px] w-[473px] bg-[#f0f0f0] border border-[#a0a0a0] shadow-[0_4px_14px_rgba(0,0,0,0.35)] text-black">
      <div className="h-[30px] bg-white flex items-center pl-2 text-[#999]">
        <span>検索と置換</span>
        <button aria-label="ヘルプ" className="ml-auto mr-[36px] text-sm">?</button>
        <button aria-label="閉じる" className="mr-[17px]">
          <svg width="11" height="11" viewBox="0 0 11 11" stroke="currentColor"><path d="M0.500 0.500l10 10M10.500 0.500l-10 10" /></svg>
        </button>
      </div>
      <div className="px-1.5 pt-2 pb-2">
        <div className="flex items-end">
          <button className="ml-0.5 w-[57px] h-[22px] border-t border-[#dcdcdc] whitespace-nowrap">検索(<u>D</u>)</button>
          <button className="relative w-[63px] h-[25px] -mb-px bg-white border border-b-0 border-[#dcdcdc] whitespace-nowrap">置換(<u>P</u>)</button>
        </div>
        <div className="h-[109px] bg-white border border-[#dcdcdc] pt-2.5 pl-2 pr-2 flex flex-col gap-1">
          <div className="h-[23px] flex items-center">
            <label htmlFor="find-what" className="w-[113px] shrink-0 whitespace-nowrap">検索する文字列(<u>N</u>):</label>
            <input id="find-what" defaultValue="コンピュータ" className="flex-1 h-full border border-[#abadb3] px-0.5 text-[11px] outline-none" />
          </div>
          <div className="h-[23px] flex items-center">
            <label htmlFor="replace-with" className="w-[113px] shrink-0 whitespace-nowrap">置換後の文字列(<u>E</u>):</label>
            <input id="replace-with" defaultValue="コンピューター" className="flex-1 h-full border border-[#abadb3] px-0.5 text-[11px] outline-none" />
          </div>
        </div>
        <div className="mt-[9px] flex">
          <DialogButton width="w-[88px]" primary>すべて置換(<u>A</u>)</DialogButton>
          <div className="w-2.5" />
          <DialogButton width="w-[74px]">置換(<u>R</u>)</DialogButton>
          <div className="w-[19px]" />
          <DialogButton width="w-[85px]">すべて検索(<u>I</u>)</DialogButton>
          <div className="w-2.5" />
          <DialogButton width="w-[79px]">次を検索(<u>F</u>)</DialogButton>
          <div className="w-[19px]" />
          <DialogButton width="w-[74px]">{null}</DialogButton>
        </div>
      </div>
    </div>
  )
}

function Step({ n, place }: { n: number; place: string }) {
  return (
    <div className={`absolute ${place} size-10 rounded-full bg-white p-[3px] shadow-[0_3px_4px_rgba(0,0,0,0.35)]`}>
      <div className="size-full rounded-full border border-[#f00] bg-white p-1">
        <div className="size-full rounded-full bg-[#dedede] flex items-center justify-center text-[26px] leading-none font-black text-[#f00] font-['Noto_Sans_CJK_JP'] [text-shadow:0_0_2px_#fff,0_0_2px_#fff]">
          {n}
        </div>
      </div>
    </div>
  )
}

function MessageBox() {
  return (
    <div role="alertdialog" aria-label="Microsoft Excel" className="absolute left-[593px] top-[349px] w-[193px] h-[124px] bg-[#f0f0f0] border border-[#1a7fd4] shadow-[0_4px_14px_rgba(0,0,0,0.5)] text-[11px] text-black">
      <div className="h-[30px] bg-white flex items-center justify-between pl-2 pr-[9px]">
        <span className="whitespace-nowrap">Microsoft Excel</span>
        <button aria-label="閉じる">
          <svg width="11" height="11" viewBox="0 0 11 11" stroke="#000"><path d="M0.500 0.500l10 10M10.500 0.500l-10 10" /></svg>
        </button>
      </div>
      <div className="pl-[17px] flex">
        <svg className="mt-4 shrink-0" width="30" height="30" viewBox="0 0 30 30">
          <circle cx="15" cy="15" r="14.500" fill="#0078d7" stroke="#1a5a96" />
          <path d="M14 11.500h2V24h-2zM14 6.500h2V9h-2z" fill="#fff" />
        </svg>
        <div className="ml-[3px] mt-2 flex flex-col items-start gap-1">
          <p className="w-[125px] h-10 pt-1 border-8 border-[#f00] rounded-md flex items-center justify-center whitespace-nowrap">3 件を置換しました。</p>
          <button className="w-[92px] h-9 border-8 border-[#f00] rounded-md bg-[#e5f1fb] flex items-center justify-center text-xs">OK</button>
        </div>
      </div>
      <Step n={8} place="left-[91px] -top-[9px]" />
      <Step n={9} place="left-[77px] top-[127px]" />
    </div>
  )
}

export default function App() {
  return (
    <div className="relative h-screen flex flex-col overflow-hidden bg-[#217346] text-xs font-['Noto_Sans','Noto_Sans_CJK_JP',sans-serif] [font-feature-settings:'palt']">
      <TitleBar />
      <MenuBar />
      <Ribbon />
      <FormulaBar />
      <main className="flex-1 min-h-0 flex bg-[#e6e6e6]">
        <Sheet />
        <VerticalScroll />
      </main>
      <SheetTabs />
      <StatusBar />
      <ReplaceDialog />
      <MessageBox />
    </div>
  )
}
